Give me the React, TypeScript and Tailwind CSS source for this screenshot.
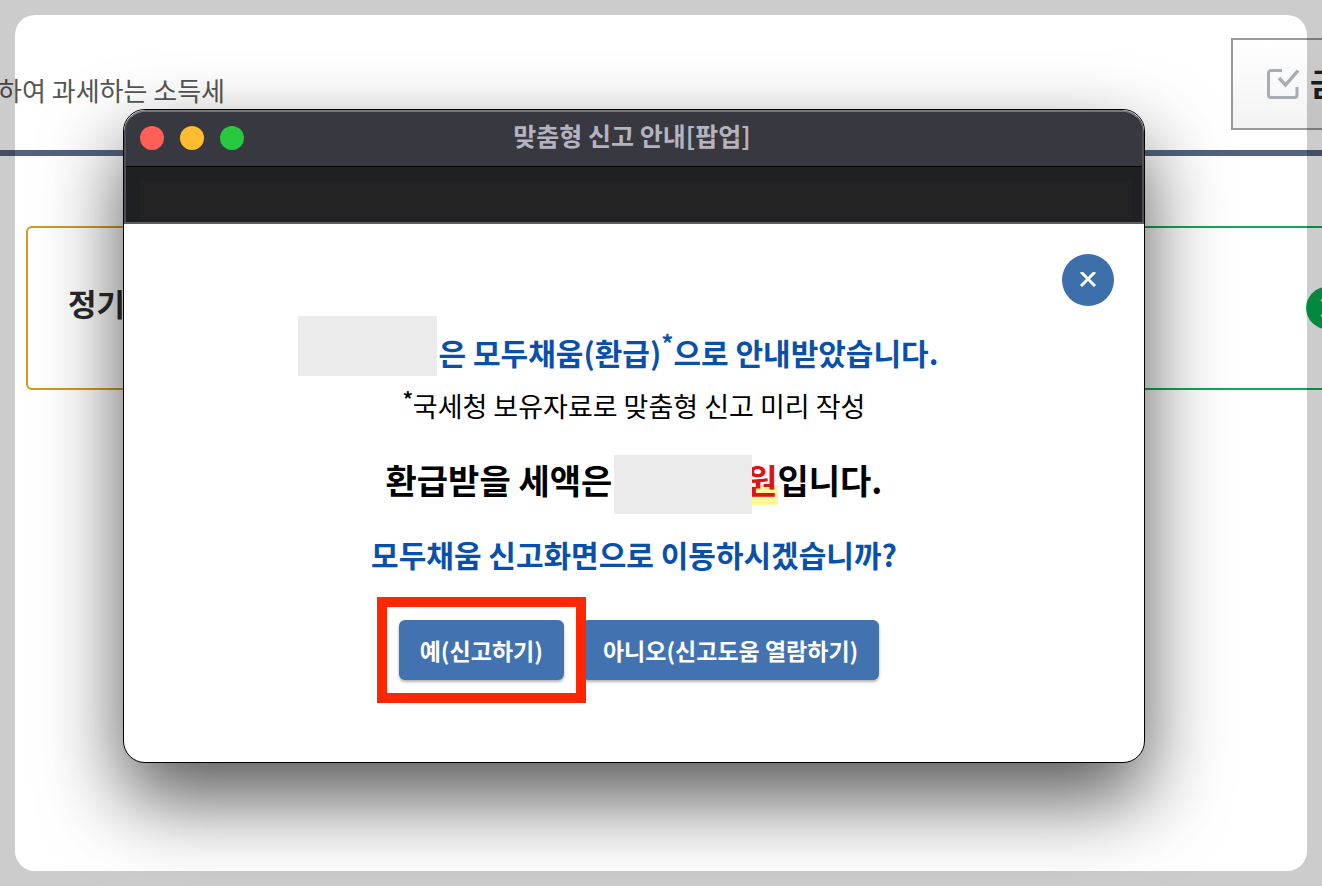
import type { FC, ReactNode } from "react";

const trafficLights = [
  { label: "닫기", color: "bg-[#ff5f57]" },
  { label: "최소화", color: "bg-[#febc2e]" },
  { label: "최대화", color: "bg-[#28c840]" }
];

const CheckIcon: FC = () => (
  <svg width="32" height="32" viewBox="0 0 32 32" fill="none" aria-hidden="true">
    <path d="M15 2.500H4a2.500 2.500 0 0 0-2.500 2.500v22A2.500 2.500 0 0 0 4 29.500h23.500a2.500 2.500 0 0 0 2.500-2.500V19" stroke="#a8adb5" strokeWidth="3" />
    <path d="M12 10l6.500 7L31 2.500" stroke="#a8adb5" strokeWidth="3.400" />
  </svg>
);

const PageHeader: FC = () => (
  <header className="flex items-start border-b-6 border-[#54627f] h-[156px]">
    <p className="flex justify-end w-[225px] pt-[70px] text-[26px] leading-10 text-[#555] whitespace-nowrap">
      합하여 과세하는 소득세
    </p>
    <div className="ml-auto w-[91px] shrink-0 pt-[38px]">
      <button
        type="button"
        className="flex items-center gap-[11px] w-[240px] h-[92px] pl-[34px] border-2 border-[#999] bg-linear-to-b from-white to-[#f3f3f3] text-[32px] font-bold text-[#222]"
      >
        <CheckIcon />
        <span className="pb-1">금</span>
      </button>
    </div>
  </header>
);

const ReportCards: FC = () => (
  <section className="grid grid-cols-2 gap-6 pl-[26px] pt-[70px] -mr-[60px]">
    <div className="flex items-center h-[164px] pl-10 pb-2.5 border-2 border-[#d39a1a] rounded-md">
      <h2 className="text-[31px] leading-10 font-bold text-[#2b2b2b] whitespace-nowrap">정기신고</h2>
    </div>
    <div className="flex items-center justify-end h-[164px] pr-8 border-2 border-[#0fa958] rounded-md">
      <svg width="42" height="42" viewBox="0 0 42 42" fill="none" aria-hidden="true">
        <circle cx="21" cy="21" r="21" fill="#06ab4f" />
        <path d="M16 12l9 9-9 9" stroke="#fff" strokeWidth="4" />
      </svg>
    </div>
  </section>
);

const WindowChrome: FC = () => (
  <div className="border-2 border-t-[#75757a] border-x-[#505055] border-b-[#5d5c61] rounded-t-[22px] bg-[#1f2024]">
    <div className="grid grid-cols-[1fr_auto_1fr] items-center h-[55px] pl-3.5 pr-[18px] pb-0.5 border-b border-black bg-[#383840] rounded-t-[20px]">
      <div className="flex gap-4">
        {trafficLights.map(({ label, color }) => (
          <button key={label} type="button" aria-label={label} className={`size-6 rounded-full ${color}`} />
        ))}
      </div>
      <h1 id="popup-title" className="pb-1.5 text-[25px] leading-8 font-bold text-[#b4b3bf]">
        맞춤형 신고 안내[팝업]
      </h1>
    </div>
    <div className="h-[55px] pl-3.5 pr-2.5 pt-3.5">
      <div className="h-[37px] bg-[#232323]" />
    </div>
  </div>
);

const ActionButton: FC<{ children: ReactNode }> = ({ children }) => (
  <button
    type="button"
    className="h-[60px] px-[21px] rounded-md bg-[#4273b0] shadow-[0_2px_3px_rgba(0,0,0,0.3)] text-[23px] leading-8 font-bold text-white whitespace-nowrap"
  >
    {children}
  </button>
);

const ReportPopup: FC = () => (
  <div
    role="dialog"
    aria-labelledby="popup-title"
    className="border border-black rounded-[22px] overflow-hidden bg-white shadow-[0_36px_80px_rgba(0,0,0,0.66)]"
  >
    <WindowChrome />
    <div className="flex flex-col items-center pb-[82px] whitespace-nowrap">
      <button
        type="button"
        aria-label="팝업 닫기"
        className="flex items-center justify-center self-end size-[52px] mt-[30px] mr-[30px] rounded-full bg-[#3d70ab]"
      >
        <svg width="16" height="16" viewBox="0 0 16 16" aria-hidden="true">
          <path d="M1 0l14 14M15 0L1 14" stroke="#fff" strokeWidth="3" />
        </svg>
      </button>
      <div className="flex items-end gap-0.5 mt-2.5 pr-8">
        <span className="w-[139px] h-[60px] bg-[#ebebeb]" />
        <p className="text-[30px] leading-[48px] font-bold text-[#0950ad]">
          은 모두채움(환급)<sup className="text-2xl">*</sup>으로 안내받았습니다.
        </p>
      </div>
      <p className="mt-2.5 text-[27px] leading-10 text-black">
        <sup className="text-xl font-bold">*</sup>국세청 보유자료로 맞춤형 신고 미리 작성
      </p>
      <p className="flex items-start mt-[29px] text-[34px] leading-[50px] font-bold text-black">
        환급받을 세액은
        <span className="relative z-10 w-[138px] h-[59px] ml-0.5 bg-[#ebebeb]" />
        <span className="-ml-1.5 bg-linear-to-b from-transparent from-60% to-[#fff799] to-60% text-[#dc1414]">원</span>
        입니다.
      </p>
      <p className="mt-[18px] text-[30px] leading-[44px] font-bold text-[#0950ad]">
        모두채움 신고화면으로 이동하시겠습니까?
      </p>
      <div className="flex gap-[18px] mt-11 pl-2.5">
        <div className="relative">
          <ActionButton>예(신고하기)</ActionButton>
          {/* marks the button to press, over both buttons */}
          <div className="absolute -inset-x-[22px] -inset-y-[23px] z-10 border-10 border-[#ff2600] pointer-events-none" />
        </div>
        <ActionButton>아니오(신고도움 열람하기)</ActionButton>
      </div>
    </div>
  </div>
);

const App: FC = () => (
  <main className="relative min-h-screen overflow-hidden bg-white font-['Noto_Sans_CJK_KR',sans-serif]">
    <PageHeader />
    <ReportCards />
    <div className="absolute inset-x-0 top-0 pt-[109px] pl-[123px] pr-[177px]">
      <ReportPopup />
    </div>
    <div className="absolute inset-[15px] rounded-[20px] shadow-[0_0_0_40px_rgba(0,0,0,0.2)] pointer-events-none" />
  </main>
);

export default App;
